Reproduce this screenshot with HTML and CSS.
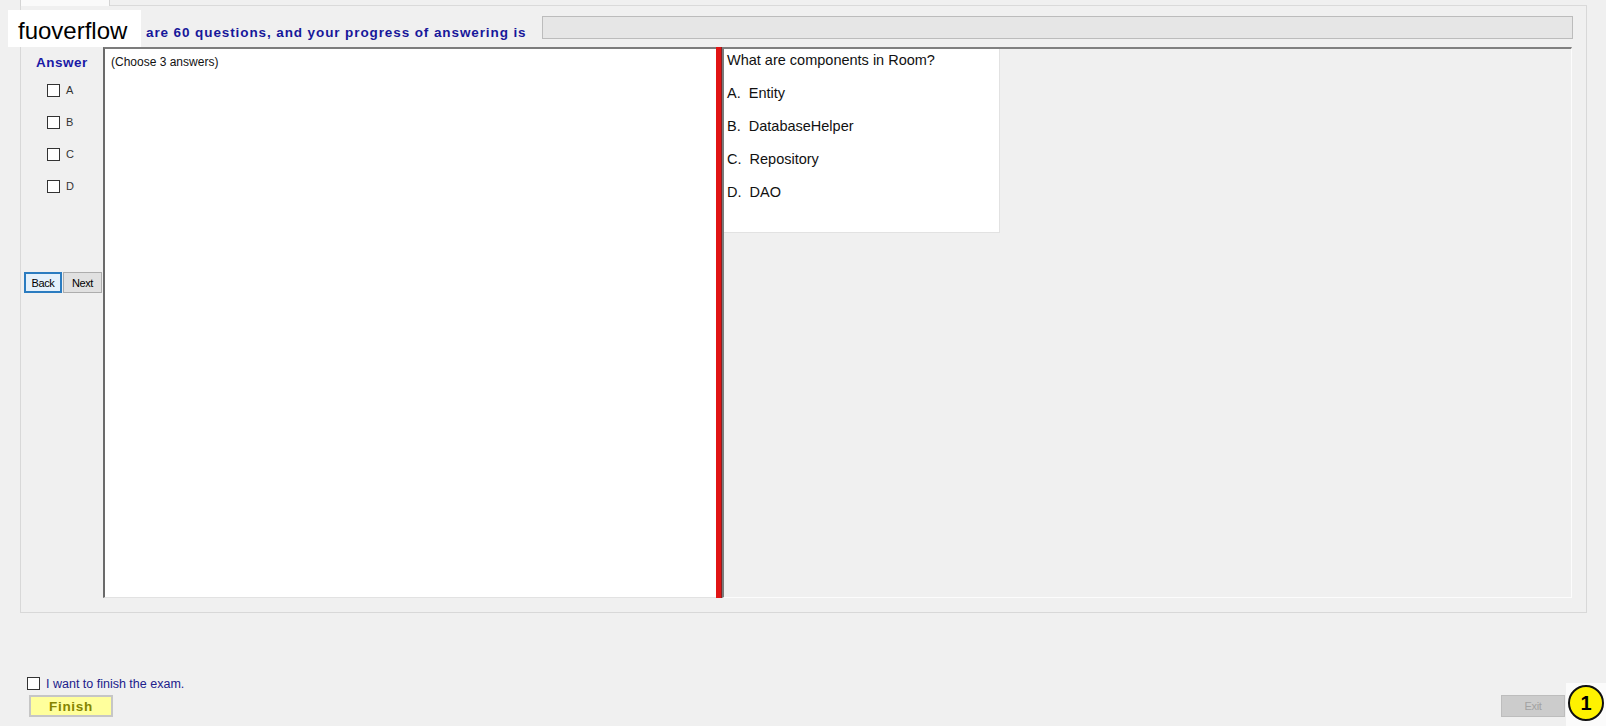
FILE: index.html
```html
<!DOCTYPE html>
<html>
<head>
<meta charset="utf-8">
<link rel="stylesheet" href="styles.css">
</head>
<body>
<div class="tabs"><div class="tab"></div><div class="tabline"></div></div>
<div class="page">
  <div class="header">
    <div class="progress-label">are 60 questions, and your progress of answering is</div>
    <div class="progress-bar"></div>
  </div>
  <div class="main">
    <div class="answers">
      <div class="answer-title">Answer</div>
      <div class="opt-list">
        <div class="opt-row"><span class="cb"></span><span class="opt-label">A</span></div>
        <div class="opt-row"><span class="cb"></span><span class="opt-label">B</span></div>
        <div class="opt-row"><span class="cb"></span><span class="opt-label">C</span></div>
        <div class="opt-row"><span class="cb"></span><span class="opt-label">D</span></div>
      </div>
      <div class="nav">
        <button class="btn btn-back">Back</button>
        <button class="btn btn-next">Next</button>
      </div>
    </div>
    <div class="qtext">(Choose 3 answers)</div>
    <div class="splitter"></div>
    <div class="right">
      <div class="qbox">
        <div class="question">What are components in Room?</div>
        <div class="choice first">A.  Entity</div>
        <div class="choice">B.  DatabaseHelper</div>
        <div class="choice">C.  Repository</div>
        <div class="choice">D.  DAO</div>
      </div>
    </div>
  </div>
</div>
<div class="footer">
  <div class="finish-col">
    <div class="finish-check"><span class="cb"></span><span class="finish-text">I want to finish the exam.</span></div>
    <button class="btn-finish">Finish</button>
  </div>
  <button class="btn-exit">Exit</button>
</div>
<div class="brand">fuoverflow</div>
<div class="badge-bg"><div class="badge">1</div></div>
</body>
</html>
```
FILE: styles.css
```css
html, body {
  margin: 0;
  padding: 0;
}
body {
  width: 1606px;
  height: 726px;
  overflow: hidden;
  position: relative;
  background: #f0f0f0;
  font-family: "Liberation Sans", Arial, sans-serif;
  color: #000;
}
.tabs {
  height: 6px;
  display: flex;
  padding-left: 20px;
}
.tab {
  width: 90px;
  height: 6px;
  box-sizing: border-box;
  background: #fafafa;
  border-left: 1px solid #d4d4d4;
  border-right: 1px solid #d4d4d4;
}
.tabline {
  width: 1477px;
  height: 6px;
  box-sizing: border-box;
  border-bottom: 1px solid #dadada;
}
.page {
  margin-left: 20px;
  width: 1567px;
  height: 607px;
  box-sizing: border-box;
  border: 1px solid #d8d8d8;
  border-top: none;
  background: #f0f0f0;
  display: flex;
  flex-direction: column;
}
.header {
  height: 41px;
  display: flex;
  align-items: flex-start;
  padding-left: 125px;
}
.progress-label {
  margin-top: 19px;
  font-size: 13.5px;
  line-height: 16px;
  font-weight: bold;
  letter-spacing: 0.9px;
  color: #17179a;
  white-space: nowrap;
}
.progress-bar {
  flex: 1;
  margin: 10px 13px 0 15px;
  height: 23px;
  box-sizing: border-box;
  background: #e6e6e6;
  border: 1px solid #bcbcbc;
}
.main {
  display: flex;
  height: 551px;
}
.answers {
  width: 82px;
  display: flex;
  flex-direction: column;
}
.answer-title {
  margin-top: 8px;
  text-align: center;
  font-size: 13.5px;
  line-height: 16px;
  font-weight: bold;
  letter-spacing: 0.5px;
  color: #1a1aa6;
}
.opt-list {
  margin-top: 13px;
  display: flex;
  flex-direction: column;
}
.opt-row {
  height: 32px;
  display: flex;
  align-items: flex-start;
  padding-left: 26px;
}
.cb {
  display: inline-block;
  width: 13px;
  height: 13px;
  box-sizing: border-box;
  border: 1px solid #333;
  background: #fff;
  flex: none;
}
.opt-label {
  margin-left: 6px;
  font-size: 11px;
  line-height: 12px;
  color: #333;
}
.nav {
  margin-top: 60px;
  margin-left: 3px;
  display: flex;
  gap: 1px;
}
.btn {
  height: 21px;
  padding: 0;
  font-family: "Liberation Sans", Arial, sans-serif;
  font-size: 11px;
  letter-spacing: -0.4px;
  color: #000;
  box-sizing: border-box;
}
.btn-back {
  width: 38px;
  background: #e5f1fb;
  border: 2px solid #2b7cc0;
}
.btn-next {
  width: 39px;
  background: #e1e1e1;
  border: 1px solid #adadad;
}
.qtext {
  width: 613px;
  box-sizing: border-box;
  background: #fff;
  border-top: 2px solid #7c7c7c;
  border-left: 2px solid #6a6a6a;
  border-bottom: 1px solid #e2e2e2;
  padding: 6px 0 0 6px;
  font-size: 12px;
  line-height: 14px;
  color: #111;
}
.splitter {
  width: 6px;
  background: #e11414;
  border-right: 1px solid #8a2020;
  box-sizing: border-box;
}
.right {
  width: 850px;
  box-sizing: border-box;
  background: #f0f0f0;
  border-top: 2px solid #808080;
  border-left: 2px solid #7a7a7a;
  border-right: 1px solid #fcfcfc;
  border-bottom: 1px solid #fcfcfc;
}
.qbox {
  width: 276px;
  height: 184px;
  box-sizing: border-box;
  background: #fff;
  border-right: 1px solid #e2e2e2;
  border-bottom: 1px solid #e2e2e2;
  padding: 1px 0 0 3px;
  font-size: 14.5px;
  color: #111;
}
.question {
  line-height: 20px;
}
.choice {
  line-height: 33px;
  white-space: pre;
}
.choice.first {
  margin-top: 7px;
}
.footer {
  display: flex;
  justify-content: space-between;
  align-items: flex-end;
  padding: 64px 41px 0 27px;
}
.finish-col {
  display: flex;
  flex-direction: column;
}
.finish-check {
  display: flex;
  align-items: center;
  height: 13px;
}
.finish-text {
  margin-left: 6px;
  font-size: 12.5px;
  color: #20208c;
  white-space: nowrap;
}
.btn-finish {
  margin: 5px 0 0 2px;
  width: 84px;
  height: 22px;
  padding: 0;
  box-sizing: border-box;
  background: #ffff9c;
  border: 2px solid #c6c6c6;
  font-family: "Liberation Sans", Arial, sans-serif;
  font-size: 13.5px;
  font-weight: bold;
  letter-spacing: 0.7px;
  color: #858500;
}
.btn-exit {
  width: 64px;
  height: 22px;
  padding: 0;
  box-sizing: border-box;
  background: #cccccc;
  border: 1px solid #bdbdbd;
  font-family: "Liberation Sans", Arial, sans-serif;
  font-size: 11px;
  letter-spacing: -0.3px;
  color: #a2a2a2;
}
.brand {
  position: absolute;
  left: 8px;
  top: 10px;
  width: 133px;
  height: 37px;
  box-sizing: border-box;
  background: #fff;
  padding: 7px 0 0 10px;
  font-size: 24px;
  line-height: 28px;
  color: #000;
}
.badge-bg {
  position: absolute;
  left: 1566px;
  top: 683px;
  width: 40px;
  height: 43px;
  background: #fbfbfb;
}
.badge {
  position: absolute;
  left: 2px;
  top: 2px;
  width: 36px;
  height: 36px;
  box-sizing: border-box;
  border-radius: 50%;
  background: #fff200;
  border: 2px solid #111;
  text-align: center;
  font-size: 20px;
  line-height: 32px;
  font-weight: bold;
  color: #000;
}
```
